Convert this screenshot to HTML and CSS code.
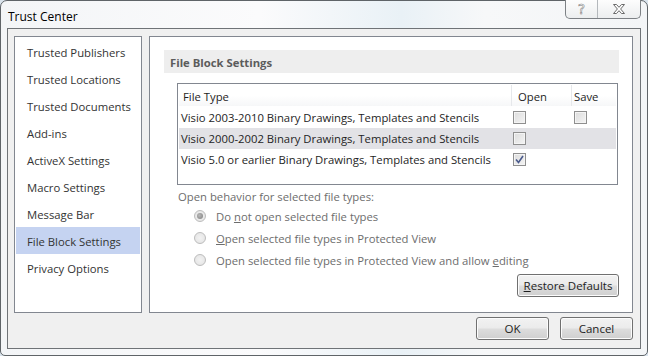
FILE: index.html
```html
<!DOCTYPE html>
<html lang="en">
  <head>
    <meta charset="UTF-8" />
    <title>Trust Center</title>
    <link rel="stylesheet" href="styles.css">
  </head>
  <body>
    <div class="window">
      <!-- Title bar -->
      <div class="titlebar">
        <span class="title">Trust Center</span>
        <div class="caption-btns">
          <span class="cap-btn help">?</span>
          <span class="cap-btn close">
            <svg width="14" height="12" viewBox="0 0 14 12">
              <path d="M1.5 1.5 H4.5 L7 4.3 L9.5 1.5 H12.5 L8.6 6 L12.5 10.5 H9.5 L7 7.7 L4.5 10.5 H1.5 L5.4 6 Z" fill="#fff" stroke="#6a6a6a" stroke-width="1" stroke-linejoin="round" />
            </svg>
          </span>
        </div>
      </div>

      <div class="client">
        <div class="panels">
          <!-- Left navigation -->
          <ul class="nav">
            <li>Trusted Publishers</li>
            <li>Trusted Locations</li>
            <li>Trusted Documents</li>
            <li>Add-ins</li>
            <li>ActiveX Settings</li>
            <li>Macro Settings</li>
            <li>Message Bar</li>
            <li class="selected">File Block Settings</li>
            <li>Privacy Options</li>
          </ul>

          <!-- Main content -->
          <div class="content">
            <div class="section-head">File Block Settings</div>

            <div class="table">
              <div class="row head">
                <span class="col-type">File Type</span>
                <span class="col-open">Open</span>
                <span class="col-save">Save</span>
              </div>
              <div class="row">
                <span class="col-type">Visio 2003-2010 Binary Drawings, Templates and Stencils</span>
                <span class="col-open"><span class="check"></span></span>
                <span class="col-save"><span class="check"></span></span>
              </div>
              <div class="row hl">
                <span class="col-type">Visio 2000-2002 Binary Drawings, Templates and Stencils</span>
                <span class="col-open"><span class="check"></span></span>
                <span class="col-save"></span>
              </div>
              <div class="row">
                <span class="col-type">Visio 5.0 or earlier Binary Drawings, Templates and Stencils</span>
                <span class="col-open">
                  <span class="check">
                    <svg width="9" height="9" viewBox="0 0 9 9">
                      <path d="M1 4.5 L3.5 7.5 L8 1" fill="none" stroke="#4a5a8c" stroke-width="1.6" />
                    </svg>
                  </span>
                </span>
                <span class="col-save"></span>
              </div>
            </div>

            <div class="behavior">
              <div class="behavior-label">Open behavior for selected file types:</div>
              <div class="radio-row"><span class="radio on"></span><span>Do <u>n</u>ot open selected file types</span></div>
              <div class="radio-row"><span class="radio"></span><span><u>O</u>pen selected file types in Protected View</span></div>
              <div class="radio-row"><span class="radio"></span><span>Open selected file types in Protected View and allow <u>e</u>diting</span></div>
            </div>

            <div class="restore-row">
              <button class="btn restore"><u>R</u>estore Defaults</button>
            </div>
          </div>
        </div>

        <div class="footer">
          <button class="btn">OK</button>
          <button class="btn">Cancel</button>
        </div>
      </div>
    </div>
  </body>
</html>
```

FILE: styles.css
```css
* {
  box-sizing: border-box;
}
body {
  margin: 0;
  background: #d9e3ec;
  font-family: "Open Sans", "Noto Sans", sans-serif;
  font-size: 11.3px;
  color: #1e1e1e;
}
.window {
  width: 648px;
  height: 356px;
  border: 1px solid #5f6468;
  border-radius: 7px 7px 5px 5px;
  background: linear-gradient(90deg, #f3f5f7 0%, #fbfbfc 40%, #e9f1f6 62%, #f7f8f9 75%, #f3f5f7 100%);
  padding: 0 6px 6px 6px;
  display: flex;
  flex-direction: column;
}
.titlebar {
  height: 28px;
  display: flex;
  align-items: flex-start;
}
.title {
  margin-top: 7px;
  margin-left: 1px;
  font-size: 12px;
  color: #000;
}
.caption-btns {
  margin-left: auto;
  display: flex;
  height: 19px;
  margin-top: -1px;
  border: 1px solid #7d8185;
  border-top: none;
  border-radius: 0 0 5px 5px;
  background: linear-gradient(#fdfdfd, #eceeef);
}
.cap-btn {
  display: flex;
  align-items: center;
  justify-content: center;
}
.help {
  width: 32px;
  border-right: 1px solid #b4b8bc;
  font-size: 14px;
  font-family: "DejaVu Sans", sans-serif;
  color: #fff;
  -webkit-text-stroke: 0.5px #777;
}
.close {
  width: 42px;
}
.client {
  flex: 1;
  border: 1px solid #6f7377;
  background: #f0f0f0;
  padding: 7px 7px 8px 6px;
  display: flex;
  flex-direction: column;
}
.panels {
  display: flex;
  gap: 7px;
  height: 277px;
}
.nav {
  list-style: none;
  margin: 0;
  padding: 1px;
  width: 130px;
  border: 1px solid #828790;
  background: #fff;
  color: #333;
}
.nav li {
  height: 27px;
  line-height: 24px;
  padding: 3px 0 0 11px;
  white-space: nowrap;
}
.nav li.selected {
  background: #c5d3f1;
}
.content {
  flex: 1;
  border: 1px solid #828790;
  background: #fff;
  padding: 13px 13px 0 14px;
}
.section-head {
  height: 23px;
  line-height: 22px;
  padding: 2px 0 0 6px;
  background: #eeeeee;
  font-weight: bold;
  color: #5c5c5c;
}
.table {
  margin: 10px 1px 0 13px;
  height: 102px;
  border: 1px solid #828790;
  padding: 1px;
}
.row {
  display: flex;
  height: 21px;
  line-height: 20px;
  padding-left: 2px;
}
.row > .col-type {
  padding-top: 1px;
}
.row.head {
  height: 21px;
  margin-bottom: 1px;
  background: linear-gradient(#fff 50%, #f6f7f8);
  padding-left: 4px;
}
.row.head span {
  padding-top: 2px;
}
.row.hl {
  background: #e2e2e6;
}
.col-type {
  width: 331px;
  white-space: nowrap;
}
.row.head .col-type {
  width: 329px;
  border-right: 1px solid #e6e8eb;
}
.col-open {
  width: 60px;
  padding-left: 1px;
  display: flex;
  align-items: center;
}
.row.head .col-open {
  padding-left: 6px;
  border-right: 1px solid #e6e8eb;
}
.col-save {
  width: 44px;
  padding-left: 2px;
  display: flex;
  align-items: center;
}
.check {
  width: 13px;
  height: 13px;
  border: 1px solid #8f8f8f;
  background: linear-gradient(135deg, #dcdcdc, #f4f4f4);
  box-shadow: inset 0 0 0 1px #f4f4f4;
  display: flex;
  align-items: center;
  justify-content: center;
}
.behavior {
  margin-left: 14px;
  color: #6d6d6d;
}
.behavior-label {
  margin-top: 3px;
  height: 17px;
  line-height: 18px;
}
.radio-row {
  height: 22px;
  display: flex;
  align-items: center;
  padding-left: 16px;
}
.radio {
  width: 12px;
  height: 12px;
  border-radius: 50%;
  border: 1px solid #bcbcbc;
  background: radial-gradient(circle, #f2f2f2 0%, #e2e2e2 100%);
  margin-right: 10px;
  display: flex;
  align-items: center;
  justify-content: center;
}
.radio.on::after {
  content: "";
  width: 6px;
  height: 6px;
  border-radius: 50%;
  background: radial-gradient(circle at 40% 40%, #b8b8b8, #7e7e7e);
}
.restore-row {
  display: flex;
  justify-content: flex-end;
  margin-top: 3px;
}
.btn {
  font-family: inherit;
  font-size: 11.5px;
  color: #1e1e1e;
  height: 23px;
  border: 1px solid #707070;
  border-radius: 3px;
  background: linear-gradient(#f2f2f2 0%, #ebebeb 48%, #dddddd 52%, #cfcfcf 100%);
  box-shadow: inset 0 0 0 1px #fcfcfc;
  padding: 0;
}
.restore {
  width: 102px;
}
.footer {
  display: flex;
  justify-content: flex-end;
  gap: 11px;
  margin-top: 4px;
}
.footer .btn {
  width: 73px;
}
```
